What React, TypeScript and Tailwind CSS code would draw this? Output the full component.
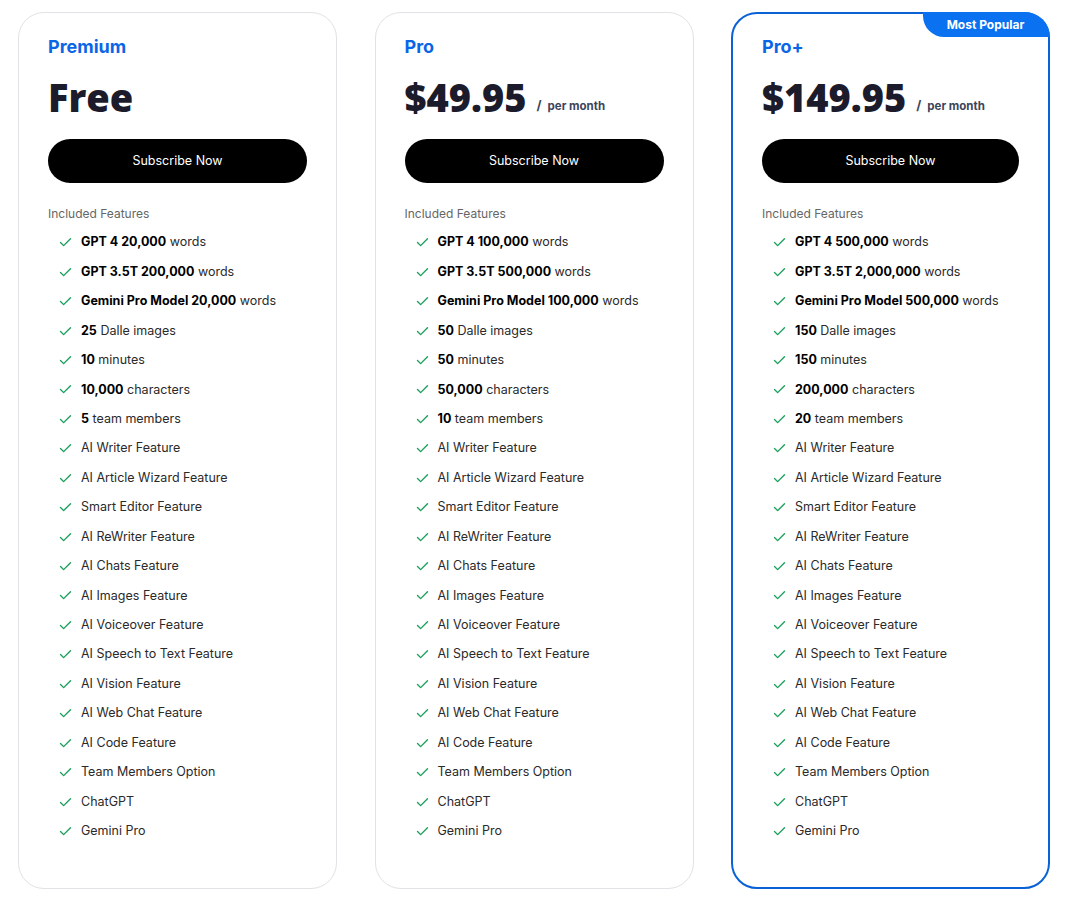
import { Check } from "lucide-react";

type Plan = {
  name: string;
  price: string;
  perMonth: boolean;
  popular: boolean;
  quotas: [string, string][];
};

const features = [
  "AI Writer Feature",
  "AI Article Wizard Feature",
  "Smart Editor Feature",
  "AI ReWriter Feature",
  "AI Chats Feature",
  "AI Images Feature",
  "AI Voiceover Feature",
  "AI Speech to Text Feature",
  "AI Vision Feature",
  "AI Web Chat Feature",
  "AI Code Feature",
  "Team Members Option",
  "ChatGPT",
  "Gemini Pro",
];

const plans: Plan[] = [
  {
    name: "Premium",
    price: "Free",
    perMonth: false,
    popular: false,
    quotas: [
      ["GPT 4 20,000", "words"],
      ["GPT 3.5T 200,000", "words"],
      ["Gemini Pro Model 20,000", "words"],
      ["25", "Dalle images"],
      ["10", "minutes"],
      ["10,000", "characters"],
      ["5", "team members"],
    ],
  },
  {
    name: "Pro",
    price: "$49.95",
    perMonth: true,
    popular: false,
    quotas: [
      ["GPT 4 100,000", "words"],
      ["GPT 3.5T 500,000", "words"],
      ["Gemini Pro Model 100,000", "words"],
      ["50", "Dalle images"],
      ["50", "minutes"],
      ["50,000", "characters"],
      ["10", "team members"],
    ],
  },
  {
    name: "Pro+",
    price: "$149.95",
    perMonth: true,
    popular: true,
    quotas: [
      ["GPT 4 500,000", "words"],
      ["GPT 3.5T 2,000,000", "words"],
      ["Gemini Pro Model 500,000", "words"],
      ["150", "Dalle images"],
      ["150", "minutes"],
      ["200,000", "characters"],
      ["20", "team members"],
    ],
  },
];

function FeatureRow({ children }: { children: React.ReactNode }) {
  return (
    <li className="flex h-[29.45px] items-center">
      <Check className="ml-[10px] h-[15px] w-[15px] shrink-0 text-[#19a05a]" strokeWidth={2.2} />
      <span className="ml-[8px] text-[12.5px] text-[#2a2a2a]">{children}</span>
    </li>
  );
}

function PlanCard({ plan }: { plan: Plan }) {
  return (
    <div
      className={
        plan.popular
          ? "relative w-[319px] rounded-[26px] border-2 border-[#0b62d6] bg-white px-[29px] pt-[21px] pb-[41px]"
          : "relative w-[319px] rounded-[26px] border border-[#e2e2e6] bg-white px-[29px] pt-[22px] pb-[42px]"
      }
    >
      {plan.popular && (
        <div className="absolute top-[-2px] right-[-2px] flex h-[25px] w-[127px] items-center justify-center rounded-tr-[26px] rounded-bl-[22px] bg-[#0a72f0] pr-[2px] text-[12px] font-bold text-white">
          Most Popular
        </div>
      )}
      <div className="h-6 text-[18px] leading-6 font-bold text-[#0a66e6]">{plan.name}</div>
      <div className="mt-[14px] flex h-12 items-end">
        <span className="text-[38px] leading-[48px] font-extrabold text-[#1b1b2b] [font-family:'Open_Sans',sans-serif]">
          {plan.price}
        </span>
        {plan.perMonth && (
          <span className="mb-[6px] ml-[10px] text-[11.5px] font-bold text-[#3d4459]">
            <span className="mr-[6px] text-[13px]">/</span>per month
          </span>
        )}
      </div>
      <button
        type="button"
        className="mt-[18px] h-[44px] w-full rounded-full bg-black text-[12.5px] text-white"
      >
        Subscribe Now
      </button>
      <div className="mt-[22px] h-[18px] text-[12px] leading-[18px] text-[#666]">Included Features</div>
      <ul className="mt-[5px]">
        {plan.quotas.map(([bold, rest]) => (
          <FeatureRow key={bold + rest}>
            <b className="font-bold text-black">{bold}</b> {rest}
          </FeatureRow>
        ))}
        {features.map((f) => (
          <FeatureRow key={f}>{f}</FeatureRow>
        ))}
      </ul>
    </div>
  );
}

export default function App() {
  return (
    <div className="min-h-[910px] bg-white pt-[12px] pl-[18px] [font-family:Inter,'Noto_Sans',sans-serif]">
      <div className="flex items-start gap-[37.5px]">
        {plans.map((p) => (
          <PlanCard key={p.name} plan={p} />
        ))}
      </div>
    </div>
  );
}
